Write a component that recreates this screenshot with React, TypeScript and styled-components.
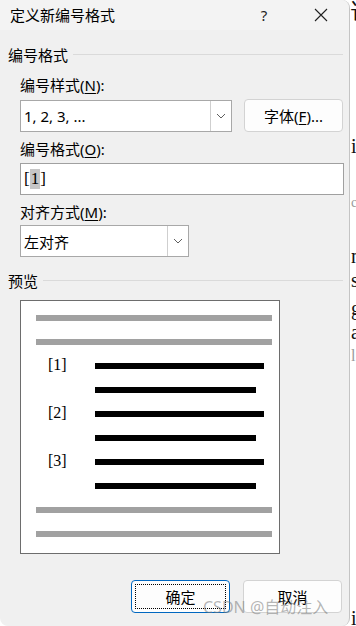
import React from "react";
import styled, { createGlobalStyle } from "styled-components";

const GlobalStyle = createGlobalStyle`
  html, body {
    margin: 0;
    padding: 0;
    background: #ffffff;
  }
  body {
    font-family: "Noto Sans", "Noto Sans CJK SC", sans-serif;
    color: #000;
  }
`;

const Page = styled.div`
  display: flex;
  width: 356px;
  height: 626px;
  overflow: hidden;
`;

const Dialog = styled.div`
  position: relative;
  width: 350px;
  height: 626px;
  flex-shrink: 0;
  box-sizing: border-box;
  background: #f0f0f0;
  border-right: 1px solid #c4c4c4;
  border-radius: 0 8px 8px 8px;
  display: flex;
  flex-direction: column;
`;

const TitleBar = styled.div`
  height: 30px;
  display: flex;
  align-items: center;
  background: #f3f3f3;
  border-radius: 0 8px 0 0;
  padding-left: 10px;
  font-size: 15px;
  line-height: 20px;
`;

const Title = styled.span`
  flex: 1;
`;

const CaptionButton = styled.div<{ $w: number }>`
  width: ${(p) => p.$w}px;
  height: 30px;
  display: flex;
  align-items: center;
  justify-content: center;
  font-size: 15px;
  color: #222;
`;

const Body = styled.div`
  display: flex;
  flex-direction: column;
  padding: 0 6px 0 0;
`;

const SectionHeader = styled.div<{ $top: number }>`
  display: flex;
  align-items: center;
  gap: 5px;
  height: 20px;
  margin-top: ${(p) => p.$top}px;
  padding-left: 8px;
  font-size: 15px;
  line-height: 20px;

  &::after {
    content: "";
    flex: 1;
    height: 1px;
    background: #dadada;
    margin-top: -1px;
  }
`;

const Label = styled.div<{ $top: number }>`
  height: 20px;
  margin-top: ${(p) => p.$top}px;
  padding-left: 20px;
  font-size: 15px;
  line-height: 20px;
  white-space: nowrap;

  u {
    text-underline-offset: 2px;
  }
`;

const Row = styled.div<{ $top: number }>`
  display: flex;
  align-items: flex-start;
  gap: 12px;
  margin-top: ${(p) => p.$top}px;
  padding-left: 20px;
`;

const Combo = styled.div<{ $w: number }>`
  width: ${(p) => p.$w}px;
  height: 32px;
  margin-top: 1px;
  box-sizing: border-box;
  display: flex;
  background: #fff;
  border: 1px solid #a8a8a8;
`;

const ComboText = styled.div`
  flex: 1;
  display: flex;
  align-items: center;
  padding-left: 3px;
  font-size: 15px;
`;

const ComboArrow = styled.div`
  width: 20px;
  display: flex;
  align-items: center;
  justify-content: center;
  border-left: 1px solid #cfcfcf;
  background: #fff;
`;

const PushButton = styled.div<{ $primary?: boolean }>`
  position: relative;
  width: 99px;
  height: 33px;
  box-sizing: border-box;
  display: flex;
  align-items: center;
  justify-content: center;
  background: #fdfdfd;
  border: 1px solid ${(p) => (p.$primary ? "#0067c0" : "#d3d3d3")};
  border-radius: 4px;
  font-size: 15px;
  line-height: 20px;

  u {
    text-underline-offset: 2px;
  }

  &::after {
    content: "";
    display: ${(p) => (p.$primary ? "block" : "none")};
    position: absolute;
    inset: 3px;
    border: 1px dotted #000;
  }
`;

const TextInput = styled.div`
  width: 324px;
  height: 32px;
  margin-top: 4px;
  margin-left: 20px;
  box-sizing: border-box;
  background: #fff;
  border: 1px solid #a0a0a0;
  padding-left: 3px;
  display: flex;
  align-items: center;
  font-family: "Liberation Serif", serif;
  font-size: 17px;
`;

const Selected = styled.span`
  background: #c6c6c6;
  line-height: 20px;
  padding: 0 1px;
`;

const Preview = styled.div`
  width: 260px;
  height: 254px;
  margin: 9px 0 0 20px;
  box-sizing: border-box;
  background: #fff;
  border: 1px solid #6d6d6d;
  padding: 14px 0 0 15px;
  display: flex;
  flex-direction: column;
  gap: 18px;
`;

const PreviewLine = styled.div`
  height: 6px;
  flex-shrink: 0;
  display: flex;
  align-items: flex-start;
`;

const Bar = styled.div<{ $w: number; $grey?: boolean }>`
  width: ${(p) => p.$w}px;
  height: 6px;
  background: ${(p) => (p.$grey ? "#a1a1a1" : "#000")};
`;

const Num = styled.div`
  width: 59px;
  box-sizing: border-box;
  padding-left: 12px;
  margin-top: -7px;
  font-family: "Liberation Serif", serif;
  font-size: 16px;
  line-height: 18px;
`;

const ButtonRow = styled.div`
  display: flex;
  justify-content: flex-end;
  gap: 13px;
  margin-top: 26px;
  padding-right: 1px;
`;

const Watermark = styled.div`
  position: absolute;
  left: 203px;
  top: 596px;
  font-size: 16px;
  line-height: 22px;
  color: rgba(120, 120, 120, 0.55);
  white-space: nowrap;
  pointer-events: none;
`;

const DocStrip = styled.div`
  flex: 1;
  overflow: hidden;
  display: flex;
  flex-direction: column;
  font-family: "Liberation Serif", serif;
  color: #111;
  padding-left: 1px;
`;

const Frag = styled.div<{ $top: number; $size: number; $muted?: boolean }>`
  margin-top: ${(p) => p.$top}px;
  font-size: ${(p) => p.$size}px;
  line-height: ${(p) => p.$size}px;
  height: ${(p) => p.$size}px;
  color: ${(p) => (p.$muted ? "#9a9a9a" : "#111")};
  white-space: nowrap;
`;

const Chevron = () => (
  <svg width="10" height="6" viewBox="0 0 10 6">
    <path d="M1 1 L5 5 L9 1" fill="none" stroke="#5f5f5f" strokeWidth="1" />
  </svg>
);

const CloseIcon = () => (
  <svg width="14" height="14" viewBox="0 0 14 14">
    <path d="M1 1 L13 13 M13 1 L1 13" stroke="#1f1f1f" strokeWidth="1.1" />
  </svg>
);

const numbered = ["[1]", "[2]", "[3]"];

export default function App() {
  return (
    <>
      <GlobalStyle />
      <Page>
        <Dialog>
          <TitleBar>
            <Title>定义新编号格式</Title>
            <CaptionButton $w={58}>?</CaptionButton>
            <CaptionButton $w={56}>
              <CloseIcon />
            </CaptionButton>
          </TitleBar>
          <Body>
            <SectionHeader $top={15}>编号格式</SectionHeader>
            <Label $top={10}>
              编号样式(<u>N</u>):
            </Label>
            <Row $top={4}>
              <Combo $w={212}>
                <ComboText>1, 2, 3, ...</ComboText>
                <ComboArrow>
                  <Chevron />
                </ComboArrow>
              </Combo>
              <PushButton>
                字体(<u>F</u>)...
              </PushButton>
            </Row>
            <Label $top={7}>
              编号格式(<u>O</u>):
            </Label>
            <TextInput>
              [<Selected>1</Selected>]
            </TextInput>
            <Label $top={7}>
              对齐方式(<u>M</u>):
            </Label>
            <Row $top={2}>
              <Combo $w={169}>
                <ComboText>左对齐</ComboText>
                <ComboArrow>
                  <Chevron />
                </ComboArrow>
              </Combo>
            </Row>
            <SectionHeader $top={14}>预览</SectionHeader>
            <Preview>
              <PreviewLine>
                <Bar $w={236} $grey />
              </PreviewLine>
              <PreviewLine>
                <Bar $w={236} $grey />
              </PreviewLine>
              {numbered.map((n) => (
                <React.Fragment key={n}>
                  <PreviewLine>
                    <Num>{n}</Num>
                    <Bar $w={169} />
                  </PreviewLine>
                  <PreviewLine>
                    <Num />
                    <Bar $w={161} />
                  </PreviewLine>
                </React.Fragment>
              ))}
              <PreviewLine>
                <Bar $w={236} $grey />
              </PreviewLine>
              <PreviewLine>
                <Bar $w={236} $grey />
              </PreviewLine>
            </Preview>
            <ButtonRow>
              <PushButton $primary>确定</PushButton>
              <PushButton>取消</PushButton>
            </ButtonRow>
          </Body>
          <Watermark>CSDN @自动注入</Watermark>
        </Dialog>
        <DocStrip>
          <Frag $top={0} $size={24}>试</Frag>
          <Frag $top={112} $size={20}>i</Frag>
          <Frag $top={40} $size={14} $muted>c</Frag>
          <Frag $top={36} $size={20}>n</Frag>
          <Frag $top={4} $size={20}>s</Frag>
          <Frag $top={8} $size={20}>g</Frag>
          <Frag $top={4} $size={20}>a</Frag>
          <Frag $top={6} $size={16} $muted>l</Frag>
          <Frag $top={244} $size={20}>i</Frag>
        </DocStrip>
      </Page>
    </>
  );
}
